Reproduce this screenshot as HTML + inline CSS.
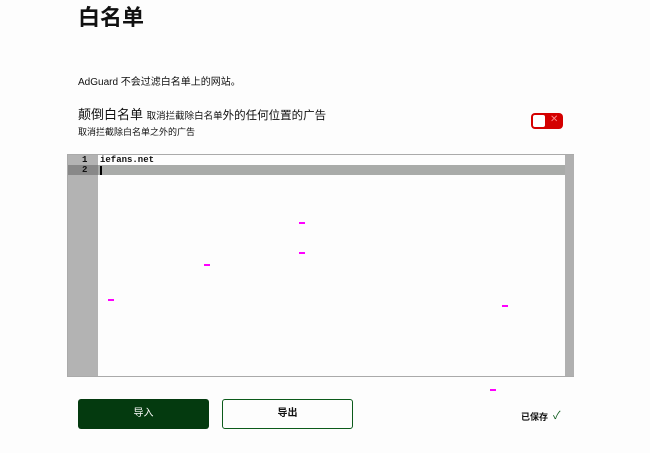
<!DOCTYPE html>
<html><head><meta charset="utf-8"><style>
*{margin:0;padding:0;box-sizing:border-box}
body{width:650px;height:453px;background:#fdfdfd;font-family:"Liberation Sans","Noto Sans CJK SC",sans-serif;color:#111;position:relative;overflow:hidden}
.a{position:absolute;white-space:nowrap}
.pk{position:absolute;width:6px;height:2px;background:#f0f}
</style></head><body>
<div class="a" style="left:78px;top:3px;font-size:22px;font-weight:bold;line-height:30px">白名单</div>
<div class="a" style="left:78px;top:73px;font-size:10px">AdGuard 不会过滤白名单上的网站。</div>
<div class="a" style="left:78px;top:104px;font-size:13px">颠倒白名单 <span style="font-size:9.5px">取消拦截除白名单</span><span style="font-size:11.5px">外的任何位置的广告</span></div>
<div class="a" style="left:78px;top:125px;font-size:9px">取消拦截除白名单之外的广告</div>
<div class="a" style="left:531px;top:113px;width:32px;height:16px;background:#d40000;border-radius:4px"></div>
<div class="a" style="left:533px;top:115px;width:12px;height:12px;background:#fff;border-radius:2px"></div>
<div class="a" style="left:550px;top:114px;color:#f88;font-size:10px">✕</div>
<div class="a" style="left:67px;top:154px;width:507px;height:223px;border:1px solid #aaa;background:#fdfdfd"></div>
<div class="a" style="left:68px;top:155px;width:30px;height:221px;background:#b3b3b3"></div>
<div class="a" style="left:565px;top:155px;width:9px;height:221px;background:#b0b0b0"></div>
<div class="a" style="left:68px;top:165px;width:30px;height:10px;background:#888"></div>
<div class="a" style="left:98px;top:165px;width:467px;height:10px;background:#a9aba9"></div>
<div class="a" style="left:82px;top:155px;font-size:9px;font-family:'Liberation Mono',monospace;font-weight:bold">1</div>
<div class="a" style="left:82px;top:165px;font-size:9px;font-family:'Liberation Mono',monospace;font-weight:bold">2</div>
<div class="a" style="left:100px;top:155px;font-size:9px;font-family:'Liberation Mono',monospace;font-weight:bold">iefans.net</div>
<div class="a" style="left:100px;top:166px;width:2px;height:9px;background:#000"></div>
<div class="pk" style="left:299px;top:222px"></div>
<div class="pk" style="left:299px;top:252px"></div>
<div class="pk" style="left:204px;top:264px"></div>
<div class="pk" style="left:108px;top:299px"></div>
<div class="pk" style="left:502px;top:305px"></div>
<div class="pk" style="left:490px;top:389px"></div>
<div class="a" style="left:78px;top:399px;width:131px;height:30px;background:#043a0f;border-radius:3px;color:#fff;font-size:10px;text-align:center;line-height:30px">导入</div>
<div class="a" style="left:222px;top:399px;width:131px;height:30px;border:1px solid #0b5a1a;border-radius:3px;font-size:10px;text-align:center;line-height:28px;font-weight:bold">导出</div>
<div class="a" style="left:521px;top:410px;font-size:9px;font-weight:bold">已保存</div>
<div class="a" style="left:553px;top:407px;font-size:11px;color:#0b5a1a">✓</div>
</body></html>
